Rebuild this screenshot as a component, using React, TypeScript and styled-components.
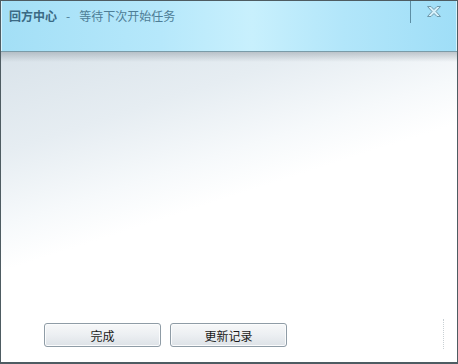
import React from "react";
import styled, { createGlobalStyle } from "styled-components";

const GlobalStyle = createGlobalStyle`
  html, body {
    margin: 0;
    padding: 0;
    background: #ffffff;
  }
  * {
    box-sizing: border-box;
  }
`;

const Window = styled.div`
  width: 458px;
  height: 364px;
  display: flex;
  flex-direction: column;
  border: 1px solid #4e5c62;
  border-bottom-width: 2px;
  background: #ffffff;
  font-family: "Noto Sans CJK SC", "Liberation Sans", sans-serif;
  overflow: hidden;
`;

const TitleBar = styled.div`
  height: 51px;
  flex: 0 0 auto;
  display: flex;
  align-items: flex-start;
  padding-left: 8px;
  background: linear-gradient(90deg, #a3dff6 0%, #b6e8fb 35%, #c8f0fd 55%, #b2e6fa 75%, #9fdef7 100%);
  border-bottom: 1px solid #7a9ba8;
  box-shadow: inset 1px 0 0 #d8f3fd, inset -1px 0 0 #d8f3fd;
`;

const Title = styled.div`
  display: flex;
  align-items: center;
  gap: 9px;
  padding-top: 6px;
  font-size: 12px;
  line-height: 18px;
  color: #4d7d96;
`;

const AppName = styled.span`
  font-weight: bold;
  color: #3b6a84;
`;

const Spacer = styled.div`
  flex: 1;
`;

const Controls = styled.div`
  display: flex;
  align-items: flex-start;
  height: 100%;
`;

const Divider = styled.div`
  width: 1px;
  height: 22px;
  background: #5d8ea4;
`;

const CloseButton = styled.button`
  width: 46px;
  height: 20px;
  padding: 4px 0 0 0;
  border: 0;
  background: transparent;
  display: flex;
  justify-content: center;
  align-items: flex-start;
  cursor: pointer;
`;

const Content = styled.div`
  flex: 1;
  display: flex;
  flex-direction: column;
  justify-content: flex-end;
  position: relative;
  background: linear-gradient(162deg, #d9e3ea 0%, #e6edf2 22%, #f6f9fb 38%, #ffffff 48%);
  &::before {
    content: "";
    position: absolute;
    left: 0;
    right: 0;
    top: 0;
    height: 10px;
    background: linear-gradient(180deg, rgba(150, 160, 168, 0.55), rgba(200, 208, 214, 0));
  }
`;

const Footer = styled.div`
  display: flex;
  align-items: center;
  gap: 9px;
  padding: 0 12px 11px 43px;
`;

const Button = styled.button`
  width: 117px;
  height: 24px;
  padding: 0;
  border: 1px solid #8f9ca6;
  border-radius: 3px;
  background: linear-gradient(180deg, #f7f8f9 0%, #eceff2 50%, #dde2e7 100%);
  box-shadow: inset 0 0 0 1px #fbfcfd;
  font-family: "Noto Sans CJK SC", "Liberation Sans", sans-serif;
  font-size: 12px;
  color: #1a1a1a;
  cursor: pointer;
`;

const Grip = styled.div`
  margin-left: auto;
  width: 2px;
  height: 30px;
  align-self: flex-end;
  margin-bottom: 2px;
  border-left: 1px dotted #c9d0d4;
`;

const CloseIcon = () => (
  <svg width="16" height="13" viewBox="0 0 16 13">
    <path
      d="M1.5 1.5 H5 L8 4.5 L11 1.5 H14.5 L10 6.5 L14.5 11.5 H11 L8 8.5 L5 11.5 H1.5 L6 6.5 Z"
      fill="#d6f1fb"
      stroke="#6f98aa"
      strokeWidth="1"
      strokeLinejoin="round"
    />
  </svg>
);

const App: React.FC = () => {
  return (
    <>
      <GlobalStyle />
      <Window>
        <TitleBar>
          <Title>
            <AppName>回方中心</AppName>
            <span>-</span>
            <span>等待下次开始任务</span>
          </Title>
          <Spacer />
          <Controls>
            <Divider />
            <CloseButton aria-label="关闭">
              <CloseIcon />
            </CloseButton>
          </Controls>
        </TitleBar>
        <Content>
          <Footer>
            <Button>完成</Button>
            <Button>更新记录</Button>
            <Grip />
          </Footer>
        </Content>
      </Window>
    </>
  );
};

export default App;
